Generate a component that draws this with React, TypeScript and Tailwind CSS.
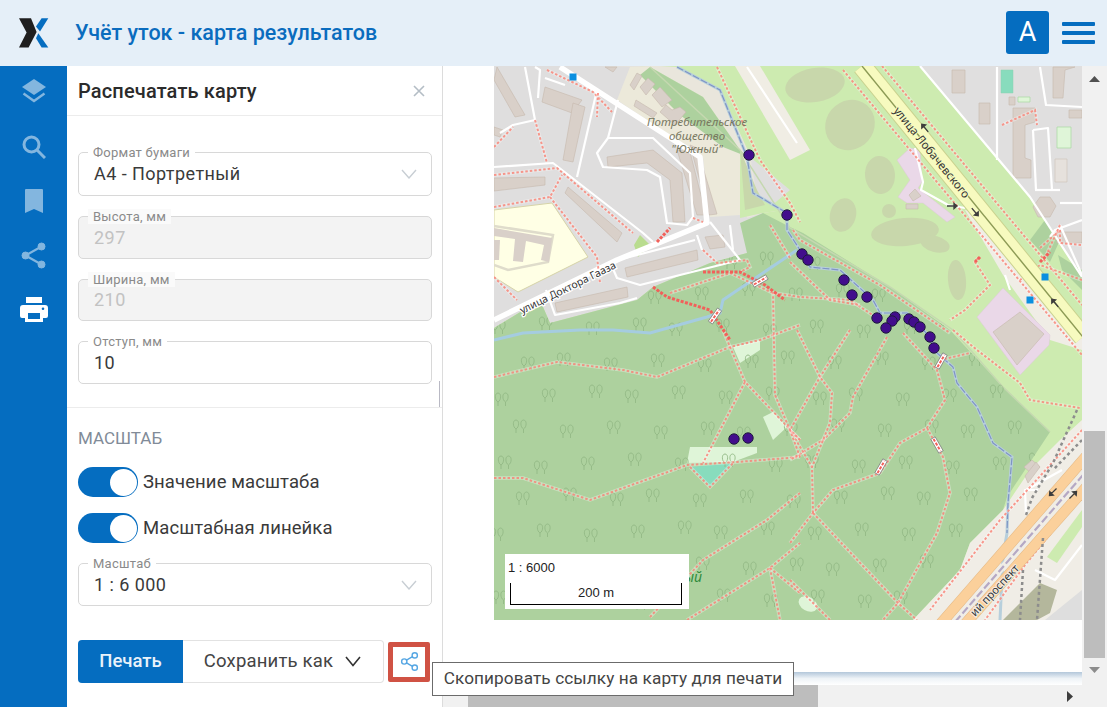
import React from "react";
import { Share2 } from "lucide-react";

type P = number[];
const pts = (a: P) => a.reduce((s, v, i) => s + (i % 2 ? "," : " ") + v, "").trim();

const forest: P = [494,328,540,300,550,323,637,300,653,287,710,263,747,253,740,223,763,213,790,227,803,233,890,287,950,330,1003,387,1050,432,1007,497,1003,510,970,543,960,570,913,620,494,620];
const buildings: P[] = [
  [497,67,525,115,515,117,494,80],[545,87,582,100,572,113,542,102],[573,103,585,107,573,162,563,160],
  [494,178,545,177,545,185,494,191],[568,187,622,233,617,242,565,193],
  [607,157,653,150,682,173,685,222,673,222,670,180,647,163,608,167],
  [625,268,697,250,698,260,627,277],[555,303,627,287,628,297,557,312],[705,237,723,235,725,247,710,249],
  [494,127,503,130,500,137,494,135],[605,67,617,67,613,72],
  [630,85,637,73,642,76,634,90],[640,87,648,78,655,84,646,95],[652,95,660,87,672,100,662,107],[636,100,657,113,653,118,634,106],
  [666,105,672,110,680,107,686,112,675,125,660,112],[677,150,690,152,706,215,697,215],[690,145,697,148,717,214,709,215],
  [952,70,965,70,965,93,952,93],[979,103,990,103,990,124,979,124],[1053,67,1075,67,1065,70,1063,98,1053,98],
  [1013,108,1035,108,1035,122,1025,125,1025,158,1031,160,1031,178,1013,178],[1069,110,1082,110,1082,118,1069,118],
  [1057,232,1082,232,1082,243,1057,243],[1009,97,1015,97,1015,105,1009,105],
  [1040,197,1050,197,1056,206,1050,217,1038,217,1033,207],
  [1024,467,1032,460,1040,467,1032,474],[1025,476,1036,462,1040,467,1028,483],[909,195,915,189,921,196,913,201],[906,204,918,204,918,209,906,209],
];
const lightGreens: P[] = [[733,347,760,340,760,350,740,363],[687,463,690,447,757,447,757,453,733,462],[763,417,773,412,787,427,773,440]];
const foot: P[] = [
  [494,377,557,362,623,370,657,377,730,347,760,340,800,325],[494,478,523,478,590,500,687,465,737,462,800,457],
  [723,330,730,347,745,382,800,440],[745,382,703,463],[800,493,767,520,703,560,650,617],[687,620,770,568,800,543],
  [770,568,780,620],[770,568,800,593],[690,467,710,487,733,463],
  [887,337,870,367,853,397,850,413,823,440,790,460],[903,333,937,370,945,400,927,428,900,443,880,473,833,490,813,513,790,543],
  [927,428,943,457,950,493,937,533,898,603,883,620],[813,513,898,603,917,620],[813,513,812,467,790,430],
  [850,330,820,377,790,430],[797,330,820,377,832,393,830,423,812,467],[790,580,830,620],[940,360,970,353],
  [953,330,977,350,1020,383,1030,400,1080,408],[800,440,790,430,775,395,773,293],[800,457,790,430],
  [670,293,730,273,773,293,800,297,850,300,880,320],[703,250,717,263,747,260,750,267,740,272],
  [494,175,557,168,633,233],[494,207,550,197,562,175],[550,197,597,257,600,283],[494,277,517,300],[494,147,513,127],
  [535,120,547,163],[547,70,593,92,612,112],[598,93,597,117],[693,218,703,222],
  [793,230,800,240,880,285,950,333],[790,258,770,225],
  [717,67,760,160,790,203,800,222],[843,70,1082,355],[882,66,1082,305],
  [1082,280,1040,265,1020,280],[1040,248,1060,230,1060,243,1082,245],[978,258,975,262,990,285,965,310,950,320],
  [1082,430,1000,520,930,610],[1082,495,1025,565,985,620],[1060,225,1045,258],
  [1002,125,1035,110,1037,125],[790,262,830,300,860,305],
];
const thickFoot: P[] = [[653,287,667,297,710,310,730,340],[657,242,670,228],[703,272,740,272,765,285,785,300],[1040,262,1050,252],[980,257,975,262]];
const whiteRoads: P[] = [
  [597,90,577,177],[618,100,608,138,653,138,690,173,693,217,687,225,667,223,660,177,647,170,603,167,597,153,608,138],
  [494,167,553,163,643,233,653,242],[535,67,540,70,538,98],[545,78,565,85],[525,67,535,120,513,125,500,133],
  [610,262,617,278,640,285,740,260,710,222],[610,262,695,240],[546,290,555,315,620,303,637,298],
  [697,235,702,250],[730,225,733,250],[747,67,797,143],[997,67,997,160],[1040,67,1046,105,1082,107],[1033,130,1036,190],
  [1033,130,1048,128,1052,190],[1035,190,1060,190],[1050,237,1055,230,1082,220],[1060,203,1082,203],
  [1060,225,1082,275],[920,66,1030,197,1082,277],[915,148,923,182,921,190,948,205,965,208],[1010,290,1005,275],[1038,490,1025,490,1026,515],[1026,490,1062,470],
  [1035,570,1055,580,1082,545],
];
const dots: P = [749,155,787,215,802,254,808,260,844,280,852,295,867,297,877,318,895,317,892,321,886,328,909,319,914,322,920,327,930,337,934,348,734,439,748,438];
const olive: P[] = [[815,85,30,17,-10],[850,125,24,26,40],[880,175,15,19,-5],[843,215,13,17,15],[905,232,34,14,-5],[957,280,9,20,-5],[935,244,15,8,15],[889,211,7,7,0]];
const bridges: P[] = [[760,281,-30],[715,316,-55],[941,361,-60],[937,445,60],[881,467,-60]];
const trees: number[][] = [];
for (let r = 0; r < 11; r++) {
  for (let c = 0; c < 13; c++) {
    const j1 = ((r * 7 + c * 13) % 11) - 5;
    const j2 = ((r * 11 + c * 5) % 9) - 4;
    trees.push([497 + c * 45 + (r % 2) * 22 + j1, 262 + r * 34 + j2]);
  }
}

function Map() {
  return (
    <svg viewBox="494 66 588 554" width="588" height="554" className="block">
      <defs>
        <clipPath id="forest"><polygon points={pts(forest)} /></clipPath>
        <clipPath id="frame"><rect x="494" y="66" width="588" height="554" /></clipPath>
      </defs>
      <g clipPath="url(#frame)">
        <rect x="494" y="66" width="588" height="554" fill="#cdebb0" />
        <polygon points="494,66 640,66 790,190 763,213 747,253 710,263 653,287 637,300 550,323 540,300 494,328" fill="#dfdede" />
        <polygon points="920,66 1030,197 1082,277 1082,66" fill="#e0dfdf" />
        <polygon points="600,66 660,66 677,67 720,90 750,155 757,197 783,210 763,213 747,218 740,150 703,97 650,67" fill="#e9e6dc" />
        <polygon points="630,67 650,67 703,97 740,150 740,215 710,217 703,157 617,100" fill="#ece9da" />
        <polygon points="650,67 703,97 740,150 748,157 723,147 680,115 640,75" fill="#add19e" />
        <polygon points="740,150 743,157 757,197 783,210 763,213 740,218" fill="#cdebb0" />
        <polygon points="740,150 757,190 765,205 745,210" fill="#c8d7ab" />
        <polygon points="735,66 760,66 810,150 790,160" fill="#f0ede4" />
        <polygon points="1030,240 1045,220 1060,240 1050,262" fill="#add19e" />
        <polygon points="1058,255 1082,270 1082,290 1062,270" fill="#add19e" />
        {olive.map((o, i) => <ellipse key={i} cx={o[0]} cy={o[1]} rx={o[2]} ry={o[3]} transform={`rotate(${o[4]} ${o[0]} ${o[1]})`} fill="#c8d7ab" />)}
        <polygon points={pts(forest)} fill="#add19e" />
        <polyline points="650,67 740,150 790,228 890,287 953,330 1003,387 1050,432" fill="none" stroke="#c5d8b0" strokeWidth="1.5" />
        <polygon points="494,210 552,203 588,257 518,292 494,277" fill="#ffffe5" stroke="#d6d3a8" strokeWidth="1" />
        <polyline points="494,226 553,235 548,262 508,270 494,265" fill="none" stroke="#dfdccb" strokeWidth="2.5" />
        <polygon points="494,228 552,238 549,262 541,260 544,245 526,241 523,262 513,261 515,239 494,236" fill="#d9d0c9" />
        <polygon points="494,240 500,240 499,260 494,260" fill="#d9d0c9" />
        <polygon points="634,245 640,235 650,245 638,257" fill="#b9dc8f" />
        <polygon points="1001,70 1013,70 1013,93 1001,93" fill="#88dcbd" stroke="#8fd0b0" strokeWidth=".5" />
        <polygon points="1018,97 1030,97 1030,102 1018,102 " fill="#dff5d8" stroke="#a8d8a0" strokeWidth=".7" />
        <polygon points="1057,127 1071,127 1071,148 1057,148" fill="#dff5d8" stroke="#a8d8a0" strokeWidth=".7" />
        <polygon points="1055,159 1067,159 1067,182 1055,182" fill="#e6e1dc" stroke="#cfc5bb" strokeWidth=".7" />
        {lightGreens.map((p, i) => <polygon key={i} points={pts(p)} fill="#dff5d8" />)}
        <polygon points="690,467 733,463 710,487" fill="#88dcbd" />
        <ellipse cx="808" cy="604" rx="10" ry="7" transform="rotate(30 808 604)" fill="#dff5d8" />
        <g clipPath="url(#forest)">
          {trees.map((t, i) => (
            <path key={i} d={`M${t[0]} ${t[1]}c-3.5-2-3.5-9 0-9s3.5 7 0 9v4M${t[0] + 7.5} ${t[1]}c-3.5-2-3.5-9 0-9s3.5 7 0 9v4`} fill="none" stroke="#93b986" strokeWidth=".9" />
          ))}
        </g>
        <polygon points="897,160 910,148 920,150 922,182 918,188 955,217 947,222 923,203 907,203 898,197 910,180" fill="#ead8e8" stroke="#dcc9d9" strokeWidth=".5" />
        <polygon points="965,210 980,213 1082,335 1082,350 1050,340 1003,275" fill="#f0ede6" />
        <polygon points="977,317 1003,288 1050,335 1049,345 1020,375" fill="#ead8e8" stroke="#dcc9d9" strokeWidth=".5" />
        <polygon points="993,332 1020,312 1044,334 1017,365" fill="#d9d0c9" stroke="#c6b9ad" strokeWidth=".6" />
        <polygon points="913,620 960,570 970,543 1003,510 1030,470 1060,440 1082,420 1082,620" fill="#f0ede6" />
        <polygon points="1047,557 1082,510 1082,527 1057,563" fill="#cdebb0" />
        <polygon points="1003,620 1040,583 1057,590 1050,613 1037,620" fill="#b4b79c" />
        <polygon points="1045,620 1082,590 1082,620" fill="#dedede" />
        {buildings.map((p, i) => <polygon key={i} points={pts(p)} fill="#d9d0c9" stroke="#c6b9ad" strokeWidth=".6" />)}
        {whiteRoads.map((p, i) => <polyline key={i} points={pts(p)} fill="none" stroke="#ffffff" strokeWidth="2.2" strokeLinejoin="round" />)}
        <polyline points="560,67 700,157 707,223 617,260 494,320" fill="none" stroke="#fff" strokeWidth="5.5" strokeLinejoin="round" />
        <polyline points="677,67 720,90 747,157 753,193 787,213 787,230 800,250 810,267 840,270 873,300 880,313 907,313 930,337 937,353 953,367 957,383 977,407 993,443 1012,457 1008,503 1007,533 1003,557 1000,620" fill="none" stroke="#b7cfdc" strokeWidth="3" />
        <polyline points="677,67 720,90 747,157 753,193 787,213 787,230 800,250 810,267 840,270 873,300 880,313 907,313 930,337 937,353 953,367 957,383 977,407 993,443 1012,457 1008,503 1007,533" fill="none" stroke="#7f95c4" strokeWidth="1.2" strokeDasharray="7 2" />
        <polyline points="494,340 523,333 580,330 613,330 650,333 707,317 720,313 723,300 797,250" fill="none" stroke="#a5cce0" strokeWidth="3" />
        {foot.map((p, i) => (
          <g key={i}>
            <polyline points={pts(p)} fill="none" stroke="#ffffff" strokeOpacity=".35" strokeWidth="3.5" />
            <polyline points={pts(p)} fill="none" stroke="#f98072" strokeOpacity=".8" strokeWidth="2" strokeDasharray="2.5 2" />
          </g>
        ))}
        {thickFoot.map((p, i) => <polyline key={i} points={pts(p)} fill="none" stroke="#f2605a" strokeWidth="3" strokeDasharray="3 1.5" />)}
        <polyline points="862,66 1083,337" fill="none" stroke="#c9d18e" strokeWidth="20" />
        <polyline points="862,66 1083,337" fill="none" stroke="#f7fabf" strokeWidth="18" />
        <polyline points="862,66 1083,337" fill="none" stroke="#8c9a55" strokeWidth="1.4" />
        <polyline points="937,628 1090,452" fill="none" stroke="#e3b885" strokeWidth="11" />
        <polyline points="937,628 1090,452" fill="none" stroke="#fbd09b" strokeWidth="10" />
        <polyline points="958,632 1090,483" fill="none" stroke="#e3b885" strokeWidth="11" />
        <polyline points="958,632 1090,483" fill="none" stroke="#fbd09b" strokeWidth="10" />
        <polyline points="948,630 1090,467" fill="none" stroke="#f0ede6" strokeWidth="6" />
        <polyline points="948,630 1090,467" fill="none" stroke="#b5a8c4" strokeWidth="2.2" strokeDasharray="8 3" />
        <polyline points="1077,410 1053,463 1032,498 1026,515" fill="none" stroke="#8d8d8d" strokeWidth="2.5" strokeDasharray="3 3" />
        <polyline points="1082,440 1053,470" fill="none" stroke="#8d8d8d" strokeWidth="2.5" strokeDasharray="3 3" />
        <polyline points="1023,570 1020,620" fill="none" stroke="#8d8d8d" strokeWidth="2.5" strokeDasharray="3 3" />
        <polyline points="1043,538 1037,620" fill="none" stroke="#8d8d8d" strokeWidth="2.5" strokeDasharray="3 3" />
        {bridges.map((b, i) => (
          <g key={i} transform={`rotate(${b[2]} ${b[0]} ${b[1]})`}>
            <rect x={b[0] - 8} y={b[1] - 2.5} width="16" height="5" fill="#fff" stroke="#777" strokeWidth=".7" />
            <line x1={b[0] - 7} y1={b[1]} x2={b[0] + 7} y2={b[1]} stroke="#f2605a" strokeWidth="2" strokeDasharray="3 1.5" />
          </g>
        ))}
        {[[573,77],[1045,277],[1030,300]].map((s, i) => <rect key={i} x={s[0] - 3.5} y={s[1] - 3.5} width="7" height="7" fill="#0a8fe0" />)}
        {[[925,128,230],[975,212,50],[1055,303,230],[952,206,0],[1053,492,135],[1073,495,-45]].map((a, i) => (
          <path key={i} d="M-5 0h7M2-2.5l3 2.5-3 2.5z" transform={`translate(${a[0]} ${a[1]}) rotate(${a[2]})`} stroke="#3d3d3d" fill="#3d3d3d" strokeWidth="1.3" />
        ))}
        <g fontFamily="'Noto Sans','DejaVu Sans',sans-serif" fill="#333" fontSize="11">
          <text x="697" y="126" textAnchor="middle" fontStyle="italic" fill="#77775f" fontSize="11.5">Потребительское</text>
          <text x="697" y="140" textAnchor="middle" fontStyle="italic" fill="#77775f" fontSize="11.5">общество</text>
          <text x="697" y="153" textAnchor="middle" fontStyle="italic" fill="#77775f" fontSize="11.5">"Южный"</text>
          <text transform="translate(522 314) rotate(-26)" stroke="#fff" strokeWidth="2.5" paintOrder="stroke" fontSize="10.5">улица Доктора Гааза</text>
          <text transform="translate(893 111) rotate(51)" stroke="#f7fabf" strokeWidth="2" paintOrder="stroke" fontSize="11.5">улица Лобачевского</text>
          <text transform="translate(975 617) rotate(-47)" stroke="#f0ede6" strokeWidth="2" paintOrder="stroke" fontSize="11">ий проспект</text>
          <text x="702" y="582" textAnchor="end" fontStyle="italic" fill="#2f8a3c" fontSize="14">Южный</text>
        </g>
        {Array.from({ length: dots.length / 2 }, (_, i) => (
          <circle key={i} cx={dots[i * 2]} cy={dots[i * 2 + 1]} r="5.2" fill="#420d8c" stroke="#1f1c3d" strokeWidth="1" />
        ))}
      </g>
    </svg>
  );
}

function Chevron() {
  return (
    <svg width="16" height="10" viewBox="0 0 16 10" fill="none" stroke="#c8ced4" strokeWidth="1.4">
      <path d="M1 1l7 8 7-8" />
    </svg>
  );
}

function Field({ label, value, disabled, h, chevron }: { label: string; value: string; disabled?: boolean; h: string; chevron?: boolean }) {
  return (
    <div className={`relative flex items-center justify-between rounded-[5px] border border-[#d8d8d8] pl-[15px] pr-[14px] ${h} ${disabled ? "bg-[#f3f3f3]" : "bg-white"}`}>
      <span className={`absolute left-[9px] top-[-8px] px-[5px] text-[13px] leading-[15px] tracking-[0.25px] text-[#8a8a8a] ${disabled ? "bg-[#fafafa]" : "bg-white"}`}>{label}</span>
      <span className={`text-[18px] leading-[24px] tracking-[0.45px] ${disabled ? "text-[#c2c2c2]" : "text-[#3a3a3a]"}`}>{value}</span>
      {chevron && <Chevron />}
    </div>
  );
}

function Toggle({ label }: { label: string }) {
  return (
    <div className="flex items-center gap-[5px]">
      <div className="flex h-[30px] w-[60px] items-center justify-end rounded-full bg-[#056dc0] pr-[1px]">
        <div className="h-[27px] w-[27px] rounded-full bg-white" />
      </div>
      <span className="text-[18.5px] leading-[24px] tracking-[0.1px] text-[#3a3a3a]">{label}</span>
    </div>
  );
}

export default function App() {
  return (
    <div className="relative flex h-[707px] w-[1107px] flex-col overflow-hidden bg-white font-['Roboto',sans-serif]">
      <header className="flex h-[66px] shrink-0 items-center bg-[#e5eff8] pl-[19px] pr-[12px]">
        <svg width="30" height="32" viewBox="0 0 30 32">
          <polygon points="0,1.3 12,1.3 17.6,15 9.6,30.6 0,30.6 7.6,15.6" fill="#1f1f1f" />
          <polygon points="22.6,1.3 29.3,1.3 21,14.6 17,9.6" fill="#056dc0" />
          <polygon points="19.3,16.3 29.3,30.6 22.6,30.6 17,21.3" fill="#056dc0" />
        </svg>
        <h1 className="ml-[26px] text-[21.5px] font-medium leading-none text-[#0a6cbe]">Учёт уток - карта результатов</h1>
        <div className="mb-px ml-auto flex h-[43px] w-[43px] items-center justify-center rounded-[3px] bg-[#056dc0] text-[27px] text-white">A</div>
        <div className="ml-[13px] flex w-[33px] flex-col gap-[5px]">
          <div className="h-[4px] rounded-[1px] bg-[#056dc0]" />
          <div className="h-[4px] rounded-[1px] bg-[#056dc0]" />
          <div className="h-[4px] rounded-[1px] bg-[#056dc0]" />
        </div>
      </header>

      <div className="flex min-h-0 flex-1">
        <nav className="flex w-[67px] shrink-0 flex-col items-center bg-[#056dc0] text-[#83b6df]">
          <div className="-mt-px flex h-[54.5px] items-center justify-center">
            <svg width="24" height="26" viewBox="0 0 24 26" fill="none">
              <path d="M12 0l12 8-12 8L0 8z" fill="currentColor" />
              <path d="M1.5 14.5L12 22l10.5-7.5" stroke="currentColor" strokeWidth="2.4" />
            </svg>
          </div>
          <div className="flex h-[54.5px] items-center justify-center">
            <svg width="24" height="24" viewBox="0 0 24 24" fill="none" stroke="currentColor" strokeWidth="3">
              <circle cx="9.5" cy="9.5" r="7.5" />
              <path d="M15 15l8 8" />
            </svg>
          </div>
          <div className="flex h-[54.5px] items-center justify-center">
            <svg width="20" height="25" viewBox="0 0 20 25" fill="currentColor">
              <path d="M2 0h16a1 1 0 0 1 1 1v23l-9-4-9 4V1a1 1 0 0 1 1-1z" />
            </svg>
          </div>
          <div className="flex h-[53.5px] items-center justify-center">
            <svg width="25" height="27" viewBox="0 0 25 27" fill="currentColor" stroke="currentColor">
              <circle cx="20.5" cy="4.5" r="3.5" />
              <circle cx="4.5" cy="13.5" r="3.5" />
              <circle cx="20.5" cy="22.5" r="3.5" />
              <path d="M20.5 4.5l-16 9 16 9" fill="none" strokeWidth="2.2" />
            </svg>
          </div>
          <div className="flex h-[54.5px] items-center justify-center text-white">
            <svg width="28" height="25" viewBox="0 0 28 25" fill="currentColor">
              <path fillRule="evenodd" d="M6 0h16v6H6zM3 8h22a3 3 0 0 1 3 3v8a2 2 0 0 1-2 2h-3v4H5v-4H2a2 2 0 0 1-2-2v-8a3 3 0 0 1 3-3zM8 16v6h12v-6zM23 10.5a1.3 1.3 0 1 0 0 2.6 1.3 1.3 0 0 0 0-2.6z" />
            </svg>
          </div>
        </nav>

        <aside className="relative flex w-[376px] shrink-0 flex-col border-r border-[#dcdcdc] bg-white">
          <div className="flex h-[50px] shrink-0 items-center justify-between border-b border-[#ececec] pl-[11px] pr-[17px]">
            <h2 className="text-[20px] font-medium tracking-[0.15px] text-[#2b2b2b]">Распечатать карту</h2>
            <svg width="12" height="12" viewBox="0 0 12 12" stroke="#b4bdc5" strokeWidth="1.6"><path d="M1 1l10 10M11 1L1 11" /></svg>
          </div>
          <div className="flex flex-col gap-[20px] pl-[11px] pr-[10px] pt-[36px]">
            <Field label="Формат бумаги" value="А4 - Портретный" h="h-[44px]" chevron />
            <Field label="Высота, мм" value="297" disabled h="h-[43px]" />
            <Field label="Ширина, мм" value="210" disabled h="h-[42px]" />
            <Field label="Отступ, мм" value="10" h="h-[43px]" />
          </div>
          <div className="absolute right-[2px] top-[315px] h-[26px] w-px bg-[#b9b9c4]" />
          <div className="mt-[23px] border-t border-[#ececec] pl-[11px] pr-[10px]">
            <div className="pt-[20px] text-[17px] leading-[20px] text-[#818b98]">МАСШТАБ</div>
            <div className="mt-[19px] flex flex-col gap-[16px]">
              <Toggle label="Значение масштаба" />
              <Toggle label="Масштабная линейка" />
            </div>
            <div className="mt-[20px]">
              <Field label="Масштаб" value="1 : 6 000" h="h-[43px]" chevron />
            </div>
            <div className="mt-[34px] flex items-center">
              <button className="flex h-[43px] w-[105px] items-center justify-center rounded-l-[4px] bg-[#056dc0] text-[18.5px] font-medium text-[#e9f2fa]">Печать</button>
              <button className="flex h-[43px] w-[201px] items-center justify-center gap-[12px] rounded-r-[4px] border border-l-0 border-[#e2e2e2] pr-px text-[18.5px] tracking-[0.2px] text-[#444]">
                Сохранить как
                <svg width="16" height="11" viewBox="0 0 16 11" fill="none" stroke="#333" strokeWidth="1.6"><path d="M1 1l7 8.5L15 1" /></svg>
              </button>
              <div className="ml-[4px] flex h-[40px] w-[42px] items-center justify-center rounded-[2px] border-[5px] border-[#d05244] bg-white">
                <Share2 size={21} strokeWidth={1.6} className="text-[#55a6e3]" />
              </div>
            </div>
          </div>
        </aside>

        <main className="flex min-w-0 flex-1">
          <div className="flex min-w-0 flex-1 flex-col">
            <div className="relative flex-1 pl-[51px]">
              <Map />
              <div className="absolute left-[62px] top-[488px] h-[55px] w-[184px] bg-white pl-[5px] pr-[7px] pt-[7px] font-['Liberation_Sans',sans-serif] text-[13px] leading-[14px] text-[#222]">
                <div className="-ml-[2px]">1 : 6000</div>
                <div className="mt-[8px] flex h-[22px] items-center justify-center border-x border-b border-black pb-[1px]">200 m</div>
              </div>
            </div>
            <div className="h-[13px] shrink-0 bg-gradient-to-b from-[#b3c7da] via-[#eef3f7] to-white" />
            <div className="flex h-[22px] shrink-0 items-center bg-[#f1f1f1]">
              <div className="ml-[25px] h-full w-[350px] bg-[#bdbdbd]" />
              <svg className="ml-auto mr-[9px]" width="6" height="11" viewBox="0 0 6 11" fill="#3e3e3e"><path d="M0 0l6 5.5L0 11z" /></svg>
            </div>
          </div>
          <div className="flex w-[25px] shrink-0 flex-col items-center bg-[#f1f1f1] pt-[10px]">
            <svg width="11" height="6" viewBox="0 0 11 6" fill="#505050"><path d="M5.5 0L11 6H0z" /></svg>
            <div className="mt-[349px] h-[227px] w-[21px] bg-[#bdbdbd]" />
            <svg className="mt-[9px]" width="11" height="6" viewBox="0 0 11 6" fill="#8c8c8c"><path d="M5.5 6L11 0H0z" /></svg>
          </div>
        </main>
      </div>

      <div className="absolute left-[432px] top-[662px] flex h-[34px] w-[362px] items-center justify-center border border-[#6b6b6b] bg-white text-[17.2px] tracking-[0.1px] text-[#444]">
        Скопировать ссылку на карту для печати
      </div>
    </div>
  );
}
